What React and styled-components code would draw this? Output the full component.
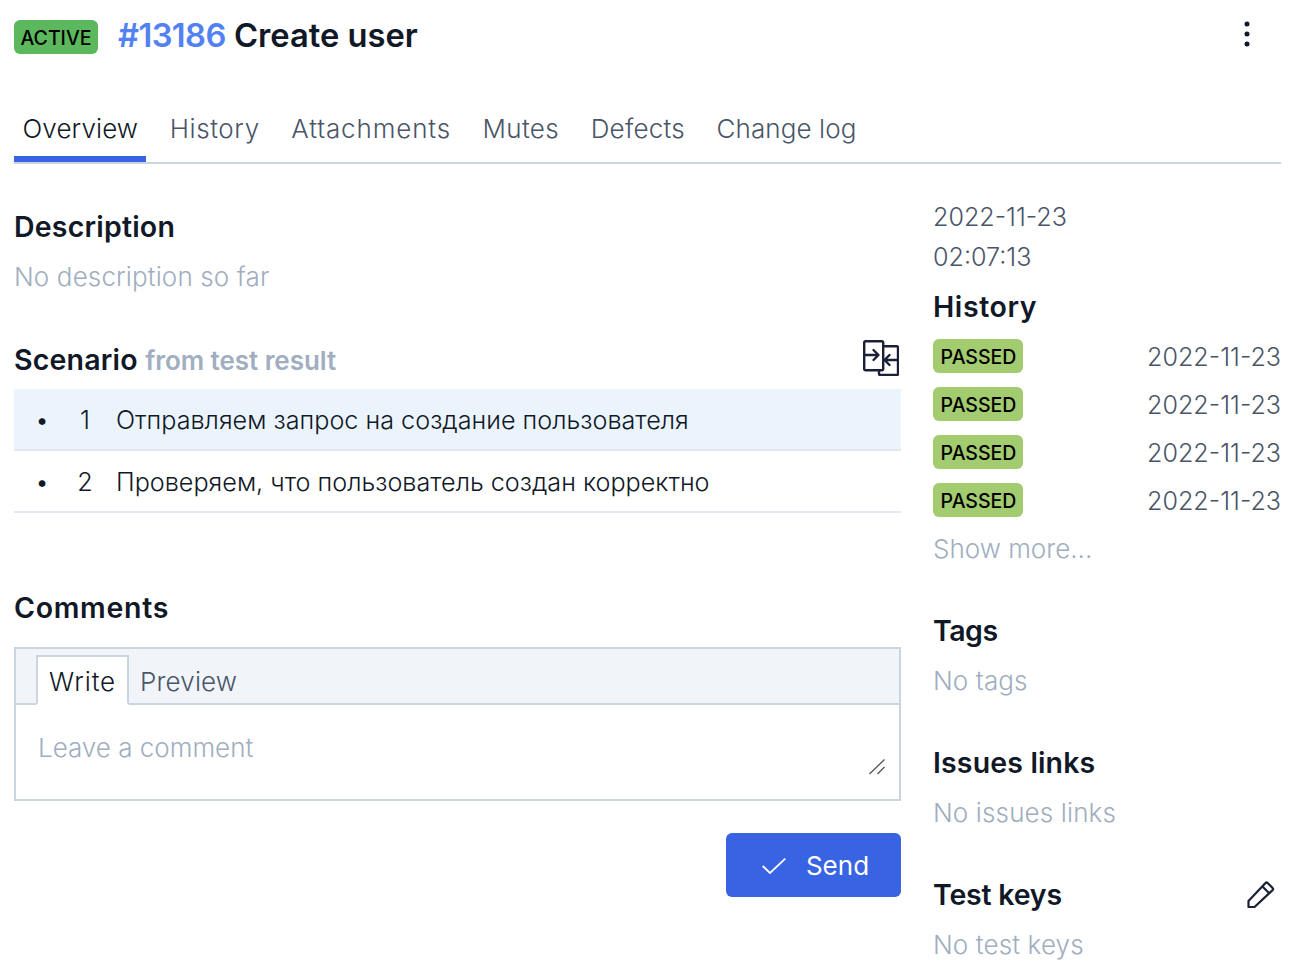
import React from 'react'
import styled, { createGlobalStyle } from 'styled-components'

const GlobalStyle = createGlobalStyle`
  html, body {
    margin: 0;
    padding: 0;
    background: #fff;
    font-family: Inter, "Noto Sans", sans-serif;
    color: #111827;
  }
`

const TABS = [
  { label: 'Overview', track: 0.1 },
  { label: 'History', track: 0.6 },
  { label: 'Attachments', track: 0.85 },
  { label: 'Mutes', track: 0.4 },
  { label: 'Defects', track: 0.25 },
  { label: 'Change log', track: 0.1 },
]

const STEPS = [
  { n: 1, text: 'Отправляем запрос на создание пользователя', active: true },
  { n: 2, text: 'Проверяем, что пользователь создан корректно' },
]

const App = () => {
  return (
    <Page>
      <GlobalStyle />

      <Header>
        <TitleArea>
          <StatusBadge>ACTIVE</StatusBadge>
          <Title>
            <TitleId>#13186</TitleId> Create user
          </Title>
        </TitleArea>
        <MenuDots>
          <svg width="6" height="28" viewBox="0 0 6 28">
            <circle cx="3" cy="4" r="2.500" fill="#111827" />
            <circle cx="3" cy="14" r="2.500" fill="#111827" />
            <circle cx="3" cy="24" r="2.500" fill="#111827" />
          </svg>
        </MenuDots>
      </Header>

      <TabBar>
        {TABS.map((tab, i) => (
          <Tab key={tab.label} $active={i === 0} $track={tab.track}>{tab.label}</Tab>
        ))}
      </TabBar>

      <Columns>
        <Main>
          <Heading $track={0.2}>Description</Heading>
          <Muted>No description so far</Muted>

          <ScenarioHead>
            <ScenarioTitle $track={0.2}>
              Scenario <ScenarioNote>from test result</ScenarioNote>
            </ScenarioTitle>
            <svg width="36" height="36" viewBox="0 0 36 36" fill="none" stroke="#1a2035" strokeWidth="2.400" strokeLinejoin="round" strokeLinecap="round">
              <rect x="1.200" y="1.200" width="19" height="29" rx="1.500" />
              <path d="M20.200 6.200h13.600a1.200 1.200 0 0 1 1.200 1.200v26.400a1.200 1.200 0 0 1-1.200 1.200H17.200a1.200 1.200 0 0 1-1.200-1.200v-3.600" />
              <path d="M1.200 15H14.500M10.500 10l5 5-5 5" />
              <path d="M35 20H22M26.500 15l-5 5 5 5" />
            </svg>
          </ScenarioHead>

          <StepList>
            {STEPS.map((step) => (
              <Step key={step.n} $active={step.active}>
                <StepDot>•</StepDot>
                <StepNumber>{step.n}</StepNumber>
                <span>{step.text}</span>
              </Step>
            ))}
          </StepList>

          <CommentsHeading $track={0.7}>Comments</CommentsHeading>
          <Editor>
            <EditorTabs>
              <EditorTab $active $track={0.9}>Write</EditorTab>
              <EditorTab $track={0.15}>Preview</EditorTab>
            </EditorTabs>
            <EditorBody>
              Leave a comment
              <Grip width="16" height="16" viewBox="0 0 16 16" stroke="#555" strokeWidth="1.300">
                <path d="M0.500 15 15.500 0.500M8.500 15 15.500 8" />
              </Grip>
            </EditorBody>
          </Editor>
          <Actions>
            <SendButton>
              <svg width="24" height="16" viewBox="0 0 24 16" fill="none" stroke="#fff" strokeWidth="1.800">
                <path d="M0.700 8 8 15 23.300 0.700" />
              </svg>
              Send
            </SendButton>
          </Actions>
        </Main>

        <Side>
          <SideText>2022-11-23</SideText>
          <SideText>02:07:13</SideText>
          <HistoryHeading $track={0.6}>History</HistoryHeading>
          {[0, 1, 2, 3].map((i) => (
            <HistoryRow key={i}>
              <PassedBadge>PASSED</PassedBadge>
              <HistoryDate>2022-11-23</HistoryDate>
            </HistoryRow>
          ))}
          <ShowMore>Show more...</ShowMore>

          <SideSection>
            <Heading $track={-0.5}>Tags</Heading>
            <Muted>No tags</Muted>
          </SideSection>
          <SideSection>
            <Heading $track={0.15}>Issues links</Heading>
            <Muted>No issues links</Muted>
          </SideSection>
          <SideSection>
            <KeysHead>
              <Heading $track={-0.2}>Test keys</Heading>
              <svg width="28" height="28" viewBox="0 0 28 28" fill="none" stroke="#1a2035" strokeWidth="2.200" strokeLinejoin="round">
                <path d="M1.500 26v-6L18.500 2a1.500 1.500 0 0 1 2.100 0l5 5a1.500 1.500 0 0 1 0 2.100L7.500 26z" />
                <path d="M15.500 5.500 22 12" />
              </svg>
            </KeysHead>
            <Muted>No test keys</Muted>
          </SideSection>
        </Side>
      </Columns>
    </Page>
  )
}

export default App

const Page = styled.div`
  width: 1267px;
  margin-left: 14px;
  height: 974px;
  overflow: hidden;
  font-size: 26px;
  line-height: 40px;
  font-weight: 350;
`

const Header = styled.div`
  height: 92px;
  padding-top: 15px;
  box-sizing: border-box;
  display: flex;
  justify-content: space-between;
  align-items: flex-start;
`

const TitleArea = styled.div`
  display: flex;
  align-items: center;
  gap: 20px;
`

const StatusBadge = styled.span`
  width: 84px;
  height: 34px;
  margin-top: 4px;
  border-radius: 6px;
  background: #5cb85c;
  color: #000;
  font-size: 19.500px;
  font-weight: 500;
  line-height: 37px;
  text-align: center;
`

const Title = styled.div`
  font-size: 32.700px;
  line-height: 40px;
  font-weight: 600;
  color: #111827;
`

const TitleId = styled.span`
  color: #5181f2;
  letter-spacing: -0.6px;
`

const MenuDots = styled.div`
  margin: 5px 31px 0 0;
  line-height: 0;
`

const TabBar = styled.div`
  display: flex;
  gap: 15.500px;
  height: 72px;
  box-sizing: border-box;
  border-bottom: 2px solid #cbd5e0;
`

const Tab = styled.div`
  height: 70px;
  box-sizing: border-box;
  padding: 17px 7.500px 0 8.500px;
  letter-spacing: ${(p) => p.$track}px;
  color: ${(p) => (p.$active ? '#111827' : '#4a5568')};
  border-bottom: 6px solid ${(p) => (p.$active ? '#3864e4' : 'transparent')};
`

const Columns = styled.div`
  display: grid;
  grid-template-columns: 887px 348px;
  gap: 32px;
  padding-top: 33px;
`

const Main = styled.div`
  min-width: 0;
  padding-top: 10px;
`

const Side = styled.div`
  min-width: 0;
`

const Heading = styled.h3`
  margin: 0;
  font-size: 28.500px;
  line-height: 40px;
  font-weight: 600;
  letter-spacing: ${(p) => p.$track || 0}px;
  color: #111827;
`

const Muted = styled.div`
  margin-top: 10px;
  letter-spacing: 0.13px;
  color: #a0aec0;
`

const ScenarioHead = styled.div`
  margin-top: 43px;
  height: 40px;
  display: flex;
  justify-content: space-between;
  align-items: flex-start;
  padding-right: 2px;
`

const ScenarioTitle = styled(Heading)``

const ScenarioNote = styled.span`
  font-size: 26px;
  letter-spacing: -0.05px;
  color: #a0aec0;
`

const StepList = styled.div`
  margin-top: 9px;
`

const Step = styled.div`
  height: 62px;
  box-sizing: border-box;
  padding-top: 1px;
  display: flex;
  align-items: center;
  font-size: 25.200px;
  border-bottom: 2px solid #e2e8f0;
  background: ${(p) => (p.$active ? '#ebf4fc' : '#fff')};
`

const StepDot = styled.span`
  width: 60px;
  padding-left: 21px;
  box-sizing: border-box;
`

const StepNumber = styled.span`
  width: 42px;
  text-align: center;
  padding-right: 20px;
  box-sizing: border-box;
`

const CommentsHeading = styled(Heading)`
  margin-top: 75px;
`

const Editor = styled.div`
  margin-top: 19px;
  height: 154px;
  box-sizing: border-box;
  border: 2px solid #cbd5e0;
`

const EditorTabs = styled.div`
  height: 56px;
  box-sizing: border-box;
  display: flex;
  align-items: flex-end;
  padding-left: 20px;
  background: #f1f5fa;
  border-bottom: 2px solid #cbd5e0;
`

const EditorTab = styled.div`
  height: 50px;
  margin: 0 0 -2px ${(p) => (p.$active ? 0 : -2)}px;
  box-sizing: border-box;
  padding: 5px 11px 0;
  letter-spacing: ${(p) => p.$track}px;
  color: ${(p) => (p.$active ? '#111827' : '#4a5568')};
  background: ${(p) => (p.$active ? '#fff' : 'transparent')};
  border: 2px solid ${(p) => (p.$active ? '#cbd5e0' : 'transparent')};
  border-bottom: 2px solid ${(p) => (p.$active ? '#fff' : 'transparent')};
`

const EditorBody = styled.div`
  position: relative;
  height: 94px;
  box-sizing: border-box;
  padding: 23px 0 0 22px;
  color: #a0aec0;
`

const Grip = styled.svg`
  position: absolute;
  right: 14px;
  bottom: 24px;
`

const Actions = styled.div`
  display: flex;
  justify-content: flex-end;
  margin-top: 32px;
`

const SendButton = styled.button`
  width: 175px;
  height: 64px;
  padding: 1px 0 0 4px;
  border: none;
  border-radius: 6px;
  background: #3864e4;
  color: #fff;
  font: inherit;
  font-weight: 400;
  display: flex;
  align-items: center;
  justify-content: center;
  gap: 20px;
`

const SideText = styled.div`
  font-size: 25.100px;
  color: #4a5568;
`

const HistoryDate = styled(SideText)`
  padding-top: 2px;
`

const HistoryHeading = styled(Heading)`
  margin-top: 10px;
  margin-bottom: 5px;
`

const HistoryRow = styled.div`
  height: 48px;
  display: flex;
  align-items: center;
  justify-content: space-between;
`

const PassedBadge = styled.span`
  width: 90px;
  height: 34px;
  padding-left: 1px;
  box-sizing: border-box;
  border-radius: 6px;
  background: #a3cb70;
  color: #000;
  font-size: 19.500px;
  font-weight: 500;
  line-height: 36px;
  text-align: center;
`

const ShowMore = styled.div`
  margin-top: 5px;
  color: #a0aec0;
`

const SideSection = styled.div`
  margin-top: 42px;
`

const KeysHead = styled.div`
  display: flex;
  justify-content: space-between;
  align-items: center;
  padding-right: 6px;
`
